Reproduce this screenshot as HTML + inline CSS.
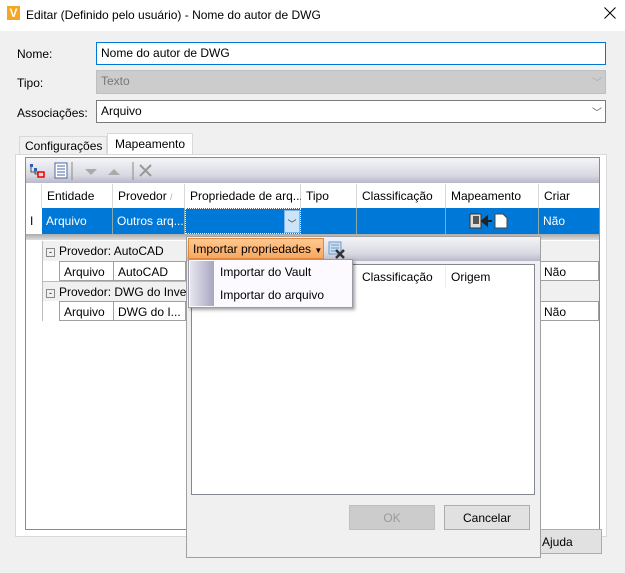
<!DOCTYPE html>
<html><head><meta charset="utf-8"><style>
*{margin:0;padding:0;box-sizing:border-box}
body{width:625px;height:573px;background:#f0f0f0;font-family:"Liberation Sans",sans-serif;font-size:12px;color:#000;position:relative;overflow:hidden}
.a{position:absolute}
.t{white-space:nowrap}
.inp{position:absolute;border:1px solid #7a7a7a;background:#fff;padding:3px 4px;height:23px}
.hd{position:absolute;top:184px;height:24px;border-right:1px solid #d8d8d8;padding:5px 5px;background:#fff;white-space:nowrap}
.sel{position:absolute;top:208px;height:26px;background:#0078d7;color:#fff;border-right:1px solid #8aa;padding:6px 4px;white-space:nowrap}
.cell{position:absolute;height:20px;background:#fff;border:1px solid #a0a0a0;padding:3px 4px;white-space:nowrap}
.grp{position:absolute;height:20px;background:#f0f0f0;padding:3px 4px;white-space:nowrap}
.btn{position:absolute;border:1px solid #adadad;background:#e1e1e1;text-align:center;padding-top:5px;height:25px}
</style></head><body>
<div class="a" style="left:0;top:0;width:625px;height:31px;background:#fff"></div>
<div class="a t" style="left:7px;top:6px;width:13px;height:14px;background:#f6a623;color:#fff;font-weight:bold;font-size:12px;text-align:center;line-height:14px">V</div>
<div class="a t" style="left:26px;top:8px;font-size:12px">Editar (Definido pelo usuário) - Nome do autor de DWG</div>
<svg class="a" style="left:604px;top:7px" width="12" height="12"><path d="M0.5 0.5l11 11M11.5 0.5l-11 11" stroke="#000" stroke-width="1"/></svg>

<div class="a t" style="left:17px;top:47px">Nome:</div>
<div class="inp t" style="left:96px;top:42px;width:510px;border-color:#0078d7">Nome do autor de DWG</div>
<div class="a t" style="left:17px;top:76px">Tipo:</div>
<div class="inp t" style="left:96px;top:70px;width:510px;height:24px;background:#ccc;border-color:#bfbfbf;color:#777">Texto</div>
<div class="a" style="left:592px;top:74px;color:#aaa;font-size:10px">﹀</div>
<div class="a t" style="left:17px;top:106px">Associações:</div>
<div class="inp t" style="left:96px;top:100px;width:510px">Arquivo</div>
<div class="a" style="left:592px;top:104px;color:#555;font-size:10px">﹀</div>

<div class="a t" style="left:19px;top:136px;width:88px;height:19px;border:1px solid #d9d9d9;border-bottom:none;padding:2px 5px;background:#f0f0f0">Configurações</div>
<div class="a t" style="left:107px;top:133px;width:86px;height:22px;border:1px solid #d9d9d9;border-bottom:none;padding:3px 7px;background:#fff">Mapeamento</div>
<div class="a" style="left:15px;top:154px;width:592px;height:383px;border:1px solid #d9d9d9;background:#fff"></div>
<div class="a" style="left:25px;top:157px;width:575px;height:373px;border:1px solid #8a8a96;background:#fff"></div>
<div class="a" style="left:26px;top:158px;width:573px;height:25px;background:linear-gradient(#f4f4f8,#d8d8e2 70%,#b8b8c8)"></div>
<svg class="a" style="left:28px;top:162px" width="130" height="18"><rect x="2" y="2" width="3" height="3" fill="#2a5fb0"/><rect x="6" y="6" width="3" height="3" fill="#2a5fb0"/><rect x="10" y="10" width="6" height="5" fill="none" stroke="#e00" stroke-width="1.5"/><path d="M3 5v5h7M7 9v3h3" stroke="#333" fill="none" stroke-width="0.8"/><rect x="27" y="1" width="12" height="15" fill="#fff" stroke="#4a6aa0"/><path d="M29 4h8M29 7h8M29 10h8M29 13h8" stroke="#4a6aa0"/><path d="M44 0v18M105 0v18" stroke="#888"/><path d="M57 7l6 6 6-6z" fill="#aaa"/><path d="M80 13l6-6 6 6z" fill="#aaa"/><path d="M112 3l11 11M123 3l-11 11" stroke="#999" stroke-width="2"/></svg>

<div class="hd" style="left:26px;width:16px;border-right:1px solid #ddd"></div>
<div class="hd" style="left:42px;width:71px">Entidade</div>
<div class="hd" style="left:113px;width:72px">Provedor <span style="color:#aaa;font-size:9px">/</span></div>
<div class="hd" style="left:185px;width:116px">Propriedade de arq...</div>
<div class="hd" style="left:301px;width:56px">Tipo</div>
<div class="hd" style="left:357px;width:89px">Classificação</div>
<div class="hd" style="left:446px;width:93px">Mapeamento</div>
<div class="hd" style="left:539px;width:60px;border-right:none">Criar</div>

<div class="a" style="left:26px;top:208px;width:16px;height:26px;background:#fff;padding:6px 4px">I</div>
<div class="sel" style="left:42px;width:71px">Arquivo</div>
<div class="sel" style="left:113px;width:72px">Outros arq...</div>
<div class="sel" style="left:185px;width:116px;border:1px dotted #fff"></div>
<div class="a" style="left:284px;top:210px;width:16px;height:23px;background:#cce4f7;border:1px solid #7eb4ea;color:#333;text-align:center;font-size:9px;padding-top:6px">﹀</div>
<div class="sel" style="left:301px;width:56px"></div>
<div class="sel" style="left:357px;width:89px"></div>
<div class="sel" style="left:446px;width:93px"><svg width="60" height="16" style="position:absolute;left:22px;top:5px"><rect x="2" y="1" width="11" height="14" fill="#ddd" stroke="#333"/><rect x="5" y="3" width="6" height="8" fill="#555"/><path d="M14 8h10M19 4l-5 4 5 4z" stroke="#222" fill="#222" stroke-width="2"/><path d="M27 1h8l4 4v10H27z" fill="#fff" stroke="#444"/></svg></div>
<div class="sel" style="left:539px;width:60px;border-right:none">Não</div>

<div class="a" style="left:26px;top:234px;width:573px;height:6px;background:linear-gradient(#aaa,#ddd)"></div>
<div class="grp" style="left:42px;top:241px;width:145px"><span style="display:inline-block;width:9px;height:9px;border:1px solid #888;font-size:9px;line-height:6px;text-align:center;margin-right:4px">-</span>Provedor: AutoCAD</div>
<div class="cell" style="left:59px;top:261px;width:55px">Arquivo</div>
<div class="cell" style="left:113px;top:261px;width:73px">AutoCAD</div>
<div class="grp" style="left:42px;top:281px;width:145px;border-top:1px solid #bbb"><span style="display:inline-block;width:9px;height:9px;border:1px solid #888;font-size:9px;line-height:6px;text-align:center;margin-right:4px">-</span>Provedor: DWG do Inve</div>
<div class="cell" style="left:59px;top:301px;width:55px">Arquivo</div>
<div class="cell" style="left:113px;top:301px;width:73px">DWG do I...</div>
<div class="a" style="left:42px;top:241px;width:1px;height:80px;background:#bbb"></div>
<div class="grp" style="left:539px;top:241px;width:60px;height:21px;background:#f0f0f0"></div>
<div class="cell" style="left:539px;top:261px;width:60px">Não</div>
<div class="grp" style="left:539px;top:281px;width:60px;height:21px"></div>
<div class="cell" style="left:539px;top:301px;width:60px">Não</div>

<div class="btn t" style="left:538px;top:529px;width:64px;padding-left:0;text-align:left;padding-left:3px">Ajuda</div>

<!-- popup -->
<div class="a" style="left:186px;top:236px;width:355px;height:322px;border:1px solid #a0a0a0;background:#f0f0f0"></div>
<div class="a" style="left:187px;top:237px;width:353px;height:24px;background:linear-gradient(#f4f4f8,#d8d8e2 70%,#b8b8c8)"></div>
<div class="a t" style="left:188px;top:238px;width:136px;height:21px;background:linear-gradient(#ffc890,#f8a860);border:1px solid #e08a40;padding:3px 4px">Importar propriedades <span style="font-size:8px">▼</span></div>
<svg class="a" style="left:328px;top:241px" width="18" height="18"><rect x="1" y="1" width="12" height="12" fill="#cde" stroke="#6a9ad0"/><path d="M3 4h8M3 7h8M3 10h8" stroke="#6a9ad0"/><path d="M8 9l8 8M16 9l-8 8" stroke="#333" stroke-width="2.5"/></svg>
<div class="a" style="left:191px;top:264px;width:344px;height:231px;border:1px solid #828790;background:#fff"></div>
<div class="a t" style="left:357px;top:266px;height:22px;border-right:1px solid #eee;padding:4px 5px;width:89px">Classificação</div>
<div class="a t" style="left:446px;top:266px;padding:4px 5px">Origem</div>
<div class="btn t" style="left:349px;top:505px;width:86px;color:#9a9a9a;background:#ccc;border-color:#bfbfbf">OK</div>
<div class="btn t" style="left:444px;top:505px;width:86px">Cancelar</div>

<div class="a" style="left:188px;top:259px;width:165px;height:49px;background:#fcfaff;border:1px solid #9a9aa6;box-shadow:2px 2px 3px rgba(0,0,0,.35)"></div>
<div class="a" style="left:190px;top:261px;width:24px;height:45px;background:linear-gradient(90deg,#e6e6f0,#a8a6c0)"></div>
<div class="a t" style="left:220px;top:265px">Importar do Vault</div>
<div class="a t" style="left:220px;top:288px">Importar do arquivo</div>
</body></html>
